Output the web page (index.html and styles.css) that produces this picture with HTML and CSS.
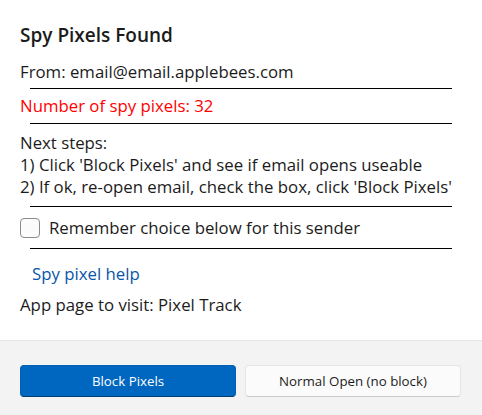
FILE: index.html
```html
<!DOCTYPE html>
<html>
<head>
<meta charset="utf-8">
<link rel="stylesheet" href="styles.css">
</head>
<body>
<div class="dialog">
  <div class="content">
    <div class="title">Spy Pixels Found</div>
    <div class="row from">From: email@email.applebees.com</div>
    <div class="rule"></div>
    <div class="row count">Number of spy pixels: 32</div>
    <div class="rule"></div>
    <div class="steps">
      <div class="row">Next steps:</div>
      <div class="row">1) Click 'Block Pixels' and see if email opens useable</div>
      <div class="row">2) If ok, re-open email, check the box, click 'Block Pixels'</div>
    </div>
    <div class="rule"></div>
    <label class="check">
      <span class="box"></span>
      <span class="row">Remember choice below for this sender</span>
    </label>
    <div class="rule"></div>
    <a class="link row" href="#">Spy pixel help</a>
    <div class="row app">App page to visit: Pixel Track</div>
  </div>
  <div class="footer">
    <button class="btn primary">Block Pixels</button>
    <button class="btn secondary">Normal Open (no block)</button>
  </div>
</div>
</body>
</html>
```
FILE: styles.css
```css
html, body {
  margin: 0;
  padding: 0;
  background: #ffffff;
}
body {
  font-family: "Open Sans", "Noto Sans", sans-serif;
  color: #1b1b1b;
  width: 482px;
  height: 415px;
  overflow: hidden;
}
.dialog {
  display: flex;
  flex-direction: column;
  height: 415px;
}
.content {
  flex: 1;
  display: flex;
  flex-direction: column;
  align-items: flex-start;
  padding: 23px 0 0 20px;
}
.title {
  font-size: 19px;
  font-weight: 600;
  line-height: 24px;
  margin-bottom: 14px;
}
.row {
  font-size: 16.8px;
  line-height: 22px;
  white-space: nowrap;
}
.rule {
  width: 422px;
  height: 1px;
  background: #000;
  margin-left: 10px;
}
.from { margin-bottom: 5px; }
.count { color: #ff0000; margin: 6px 0; }
.steps { margin: 8px 0; }
.check {
  display: flex;
  align-items: center;
  gap: 9px;
  height: 20px;
  margin: 11px 0 10px;
}
.box {
  width: 18px;
  height: 18px;
  border: 1px solid #8a8a8a;
  border-radius: 4px;
  background: #fbfbfb;
}
.link {
  color: #0a55a8;
  text-decoration: none;
  margin: 14px 0 0 12px;
}
.app { margin-top: 9px; }
.footer {
  height: 75px;
  background: #f3f3f3;
  border-top: 1px solid #e5e5e5;
  display: flex;
  gap: 9px;
  padding: 24px 21px 0 20px;
  box-sizing: border-box;
}
.btn {
  font-family: "Open Sans", "Noto Sans", sans-serif;
  font-size: 13.3px;
  height: 32px;
  flex: 1;
  border-radius: 4px;
  cursor: pointer;
  padding: 0;
}
.primary {
  background: #0067c0;
  color: #fff;
  border: 1px solid #0060b4;
  border-bottom-color: #003e73;
}
.secondary {
  background: #fbfbfb;
  color: #1b1b1b;
  border: 1px solid #e5e5e5;
  border-bottom-color: #cccccc;
}
```
